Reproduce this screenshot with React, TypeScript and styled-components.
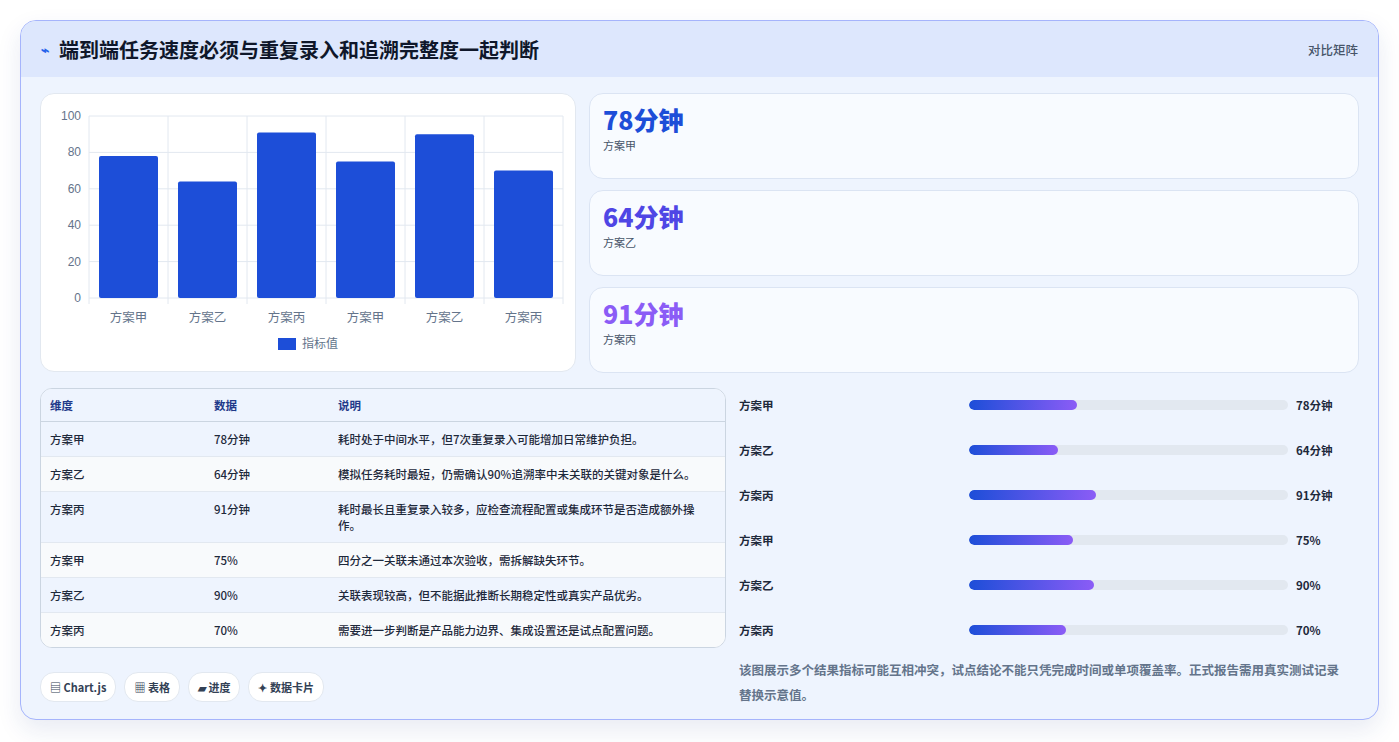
import styled, { createGlobalStyle } from 'styled-components';

const GlobalStyle = createGlobalStyle`
  body {
    margin: 0;
    background: #ffffff;
    font-family: 'Noto Sans CJK SC', 'Noto Sans', sans-serif;
  }
`;

const chartData = [
  { label: '方案甲', value: 78 },
  { label: '方案乙', value: 64 },
  { label: '方案丙', value: 91 },
  { label: '方案甲', value: 75 },
  { label: '方案乙', value: 90 },
  { label: '方案丙', value: 70 },
];

const kpis = [
  { value: '78分钟', label: '方案甲', color: '#1d4ed8' },
  { value: '64分钟', label: '方案乙', color: '#4f46e5' },
  { value: '91分钟', label: '方案丙', color: '#8b5cf6' },
];

const rows = [
  ['方案甲', '78分钟', '耗时处于中间水平，但7次重复录入可能增加日常维护负担。'],
  ['方案乙', '64分钟', '模拟任务耗时最短，仍需确认90%追溯率中未关联的关键对象是什么。'],
  ['方案丙', '91分钟', '耗时最长且重复录入较多，应检查流程配置或集成环节是否造成额外操作。'],
  ['方案甲', '75%', '四分之一关联未通过本次验收，需拆解缺失环节。'],
  ['方案乙', '90%', '关联表现较高，但不能据此推断长期稳定性或真实产品优劣。'],
  ['方案丙', '70%', '需要进一步判断是产品能力边界、集成设置还是试点配置问题。'],
];

const chips = ['▤ Chart.js', '▦ 表格', '▰ 进度', '✦ 数据卡片'];

const BarChart = () => {
  const left = 48;
  const top = 22;
  const w = 474;
  const h = 182;
  const colW = w / chartData.length;
  return (
    <svg width="535" height="279" viewBox="0 0 535 279">
      {[0, 20, 40, 60, 80, 100].map((t) => {
        const y = top + h - (t / 100) * h;
        return (
          <g key={t}>
            <line x1={left} x2={left + w} y1={y} y2={y} stroke="#e2e8f0" />
            <text x={left - 8} y={y + 4} textAnchor="end" fontSize="12" fill="#64748b" fontFamily="Liberation Sans, sans-serif">{t}</text>
          </g>
        );
      })}
      {chartData.map((d, i) => {
        const x = left + i * colW;
        return <line key={'v' + i} x1={x} x2={x} y1={top} y2={top + h + 6} stroke="#e2e8f0" />;
      })}
      <line x1={left + w} x2={left + w} y1={top} y2={top + h + 6} stroke="#e2e8f0" />
      {chartData.map((d, i) => {
        const bh = (d.value / 100) * h;
        const x = left + i * colW + 10;
        return (
          <g key={'b' + i}>
            <rect x={x} y={top + h - bh} width={colW - 20} height={bh} rx="2" fill="#1d4ed8" />
            <text x={left + i * colW + colW / 2} y={top + h + 24} textAnchor="middle" fontSize="12.5" fill="#64748b">{d.label}</text>
          </g>
        );
      })}
      <rect x="237" y="244" width="18" height="12" fill="#1d4ed8" />
      <text x="261" y="254" fontSize="12" fill="#64748b">指标值</text>
    </svg>
  );
};

export default function App() {
  return (
    <>
      <GlobalStyle />
      <Page>
        <Card>
          <Header>
            <Title>
              <Bolt>⌁</Bolt>
              端到端任务速度必须与重复录入和追溯完整度一起判断
            </Title>
            <HeaderTag>对比矩阵</HeaderTag>
          </Header>
          <Body>
            <TopRow>
              <ChartCard>
                <BarChart />
              </ChartCard>
              <KpiColumn>
                {kpis.map((k) => (
                  <KpiCard key={k.label}>
                    <KpiValue $color={k.color}>{k.value}</KpiValue>
                    <KpiLabel>{k.label}</KpiLabel>
                  </KpiCard>
                ))}
              </KpiColumn>
            </TopRow>
            <BottomRow>
              <LeftCol>
                <Table>
                  <colgroup>
                    <col style={{ width: 164 }} />
                    <col style={{ width: 124 }} />
                    <col />
                  </colgroup>
                  <thead>
                    <tr>
                      <Th>维度</Th>
                      <Th>数据</Th>
                      <Th>说明</Th>
                    </tr>
                  </thead>
                  <tbody>
                    {rows.map((r, i) => (
                      <Tr key={i} $alt={i % 2 === 1}>
                        <Td>{r[0]}</Td>
                        <Td>{r[1]}</Td>
                        <Td>{r[2]}</Td>
                      </Tr>
                    ))}
                  </tbody>
                </Table>
                <Chips>
                  {chips.map((c) => (
                    <Chip key={c}>{c}</Chip>
                  ))}
                </Chips>
              </LeftCol>
              <RightCol>
                <Bars>
                  {chartData.map((d, i) => (
                    <BarRow key={i}>
                      <BarLabel>{d.label}</BarLabel>
                      <Track>
                        <Fill style={{ width: `${d.value * 0.436}%` }} />
                      </Track>
                      <BarValue>{rows[i][1]}</BarValue>
                    </BarRow>
                  ))}
                </Bars>
                <Note>
                  该图展示多个结果指标可能互相冲突，试点结论不能只凭完成时间或单项覆盖率。正式报告需用真实测试记录替换示意值。
                </Note>
              </RightCol>
            </BottomRow>
          </Body>
        </Card>
      </Page>
    </>
  );
}

const Page = styled.div`
  padding: 20px 20px 22px 20px;
  box-sizing: border-box;
  height: 742px;
`;

const Card = styled.div`
  border: 1px solid #a5b4fc;
  border-radius: 16px;
  overflow: hidden;
  background: #eef4fe;
  box-shadow: 0 10px 24px rgba(30, 58, 138, 0.1);
  height: 700px;
  box-sizing: border-box;
`;

const Header = styled.div`
  height: 56px;
  background: #dde7fd;
  display: flex;
  align-items: center;
  justify-content: space-between;
  padding: 0 20px;
`;

const Title = styled.div`
  display: flex;
  align-items: center;
  gap: 10px;
  font-size: 20px;
  font-weight: 700;
  color: #0f172a;
`;

const Bolt = styled.span`
  color: #2563eb;
  font-size: 14px;
`;

const HeaderTag = styled.div`
  font-size: 12.5px;
  font-weight: 500;
  color: #475569;
`;

const Body = styled.div`
  padding: 16px 19px 0 19px;
`;

const TopRow = styled.div`
  display: grid;
  grid-template-columns: 536px 1fr;
  gap: 13px;
`;

const ChartCard = styled.div`
  background: #fff;
  border: 1px solid #e2e8f0;
  border-radius: 14px;
  height: 279px;
  box-sizing: border-box;
  overflow: hidden;
`;

const KpiColumn = styled.div`
  display: flex;
  flex-direction: column;
  gap: 11px;
`;

const KpiCard = styled.div`
  background: #f8fbff;
  border: 1px solid #dbe4f3;
  border-radius: 14px;
  height: 86px;
  box-sizing: border-box;
  padding: 9px 13px;
`;

const KpiValue = styled.div<{ $color: string }>`
  font-size: 25px;
  font-weight: 800;
  color: ${({ $color }) => $color};
  line-height: 32px;
`;

const KpiLabel = styled.div`
  font-size: 11px;
  color: #475569;
  margin-top: 2px;
`;

const BottomRow = styled.div`
  display: grid;
  grid-template-columns: 686px 1fr;
  gap: 13px;
  margin-top: 15px;
`;

const LeftCol = styled.div`
  display: flex;
  flex-direction: column;
`;

const Table = styled.table`
  table-layout: fixed;
  border-collapse: separate;
  border-spacing: 0;
  border: 1px solid #cbd5e1;
  border-radius: 12px;
  overflow: hidden;
  width: 100%;
  font-size: 11.5px;
  background: #fff;
`;

const Th = styled.th`
  text-align: left;
  font-weight: 700;
  color: #1e3a8a;
  background: #eef4fe;
  padding: 8px 9px;
  line-height: 16px;
  border-bottom: 1px solid #cbd5e1;
`;

const Tr = styled.tr<{ $alt: boolean }>`
  background: ${({ $alt }) => ($alt ? '#f8fafc' : '#eef4fe')};
  & td {
    border-bottom: 1px solid #e2e8f0;
  }
  &:last-child td {
    border-bottom: none;
  }
`;

const Td = styled.td`
  padding: 9px 9px;
  color: #1e293b;
  font-weight: 500;
  vertical-align: top;
  line-height: 16px;
`;

const Chips = styled.div`
  display: flex;
  gap: 8px;
  margin-top: 24px;
`;

const Chip = styled.div`
  background: #fff;
  border: 1px solid #e2e8f0;
  border-radius: 14px;
  padding: 0 9px;
  height: 28px;
  display: flex;
  align-items: center;
  font-size: 11px;
  font-weight: 700;
  color: #334155;
`;

const RightCol = styled.div`
  display: flex;
  flex-direction: column;
`;

const Bars = styled.div`
  display: flex;
  flex-direction: column;
  gap: 27px;
  padding-top: 8px;
`;

const BarRow = styled.div`
  display: grid;
  grid-template-columns: 222px 319px 1fr;
  gap: 8px;
  align-items: center;
  height: 18px;
`;

const BarLabel = styled.div`
  font-size: 11.5px;
  font-weight: 700;
  color: #1e293b;
`;

const Track = styled.div`
  height: 10px;
  border-radius: 5px;
  background: #e2e8f0;
  overflow: hidden;
`;

const Fill = styled.div`
  height: 100%;
  border-radius: 5px;
  background: linear-gradient(90deg, #1d4ed8, #8b5cf6);
`;

const BarValue = styled.div`
  font-size: 11.5px;
  font-weight: 700;
  color: #1e293b;
`;

const Note = styled.div`
  margin-top: 18px;
  padding-right: 8px;
  font-size: 12.5px;
  font-weight: 600;
  color: #64748b;
  line-height: 25px;
`;
